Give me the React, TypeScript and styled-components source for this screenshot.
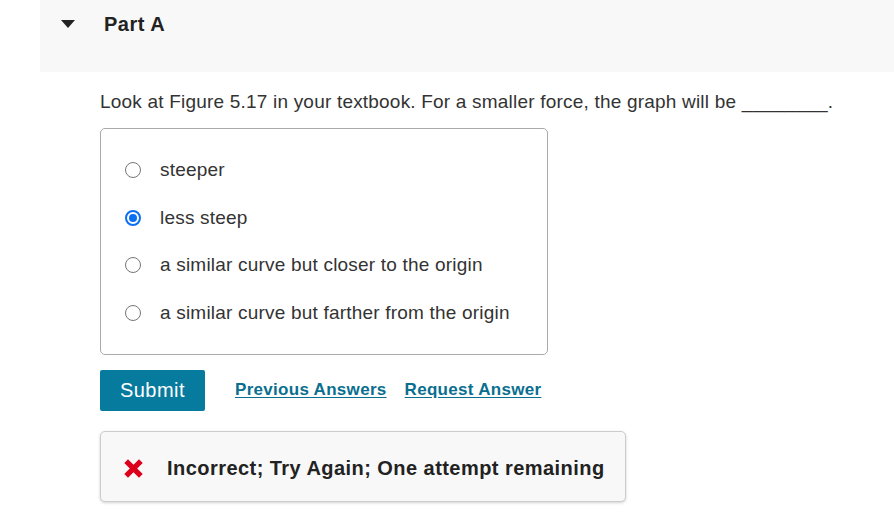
import React from 'react'
import styled, { createGlobalStyle } from 'styled-components'

const GlobalStyle = createGlobalStyle`
    html, body {
        margin: 0;
        padding: 0;
        background: #fff;
        font-family: "Liberation Sans", Arial, sans-serif;
        color: #333;
    }
`

const Page = styled.div`
    width: 894px;
    height: 517px;
    overflow: hidden;
`

const PartHeader = styled.div`
    margin-left: 40px;
    height: 72px;
    background: #f8f8f8;
    display: flex;
    align-items: flex-start;
    padding-top: 12px;
    box-sizing: border-box;
`

const Caret = styled.span`
    width: 0;
    height: 0;
    margin: 8px 0 0 21px;
    border-left: 7px solid transparent;
    border-right: 7px solid transparent;
    border-top: 8px solid #222;
`

const PartTitle = styled.h2`
    margin: 0 0 0 29px;
    font-size: 20px;
    letter-spacing: 0.5px;
    font-weight: bold;
    color: #222;
    line-height: 24px;
`

const Body = styled.div`
    padding: 18px 0 0 100px;
`

const Question = styled.p`
    margin: 0;
    font-size: 19px;
    letter-spacing: 0.2px;
    line-height: 24px;
    white-space: nowrap;
`

const Options = styled.div`
    margin-top: 14px;
    width: 448px;
    height: 227px;
    box-sizing: border-box;
    border: 1px solid #aaa;
    border-radius: 5px;
    padding: 29px 0 0 24px;
    display: flex;
    flex-direction: column;
    gap: 23.5px;
`

const Option = styled.label`
    display: flex;
    align-items: center;
    gap: 19px;
    font-size: 19px;
    letter-spacing: 0.2px;
    line-height: 24px;
    color: #333;
`

const Radio = styled.span<{ checked?: boolean }>`
    width: 16px;
    height: 16px;
    box-sizing: border-box;
    border-radius: 50%;
    border: ${p => (p.checked ? '2px solid #0b6ff2' : '1.5px solid #767676')};
    display: flex;
    align-items: center;
    justify-content: center;
    &::after {
        content: '';
        display: ${p => (p.checked ? 'block' : 'none')};
        width: 8px;
        height: 8px;
        border-radius: 50%;
        background: #0b6ff2;
    }
`

const Actions = styled.div`
    margin-top: 15px;
    display: flex;
    align-items: center;
`

const SubmitButton = styled.button`
    width: 105px;
    height: 41px;
    background: #077b9e;
    color: #fff;
    border: none;
    border-radius: 2px;
    font-family: inherit;
    font-size: 20px;
    letter-spacing: 0.5px;
    padding: 0;
`

const Link = styled.a<{ first?: boolean }>`
    margin-left: ${p => (p.first ? '30px' : '18px')};
    color: #0a6f8f;
    font-size: 17px;
    letter-spacing: 0.3px;
    font-weight: bold;
    text-decoration: underline;
    text-underline-offset: 2px;
    margin-top: -2px;
`

const Feedback = styled.div`
    margin-top: 20px;
    width: 526px;
    height: 71px;
    box-sizing: border-box;
    background: #f8f8f8;
    border: 1px solid #ccc;
    border-radius: 5px;
    box-shadow: 0 1px 3px rgba(0, 0, 0, 0.18);
    display: flex;
    align-items: center;
    padding: 3px 0 0 22px;
    gap: 23px;
`

const FeedbackText = styled.span`
    font-size: 20px;
    letter-spacing: 0.45px;
    font-weight: bold;
    color: #222;
    white-space: nowrap;
`

const CrossIcon = () => (
    <svg width="21" height="21" viewBox="0 0 20 20">
        <path d="M3 3 L17 17 M17 3 L3 17" stroke="#dc001c" strokeWidth="5" strokeLinecap="butt" />
    </svg>
)

const choices = [
    'steeper',
    'less steep',
    'a similar curve but closer to the origin',
    'a similar curve but farther from the origin',
]

export default function App() {
    return (
        <Page>
            <GlobalStyle />
            <PartHeader>
                <Caret />
                <PartTitle>Part A</PartTitle>
            </PartHeader>
            <Body>
                <Question>
                    Look at Figure 5.17 in your textbook. For a smaller force, the graph will be ________.
                </Question>
                <Options>
                    {choices.map((c, i) => (
                        <Option key={c}>
                            <Radio checked={i === 1} />
                            {c}
                        </Option>
                    ))}
                </Options>
                <Actions>
                    <SubmitButton>Submit</SubmitButton>
                    <Link first href="#">Previous Answers</Link>
                    <Link href="#">Request Answer</Link>
                </Actions>
                <Feedback>
                    <CrossIcon />
                    <FeedbackText>Incorrect; Try Again; One attempt remaining</FeedbackText>
                </Feedback>
            </Body>
        </Page>
    )
}
